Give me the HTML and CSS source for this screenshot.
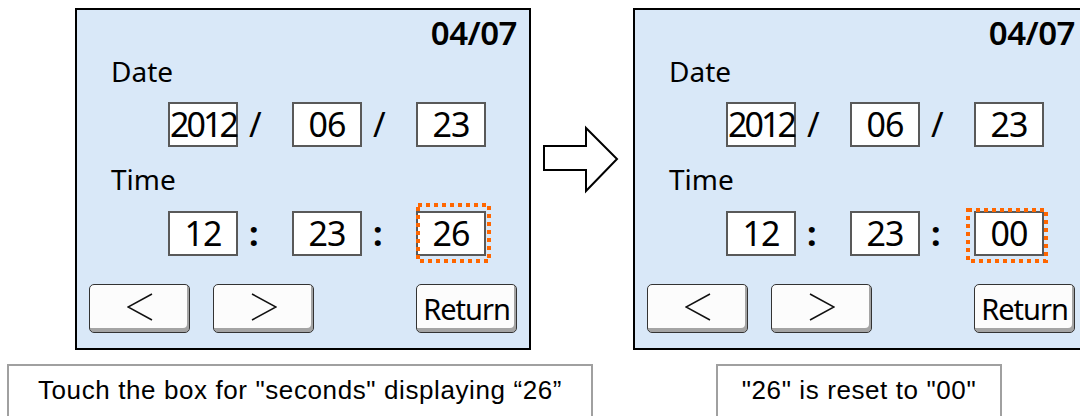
FILE: index.html
```html
<!DOCTYPE html>
<html lang="en">
<head>
    <meta charset="UTF-8">
    <meta name="viewport" content="width=device-width, initial-scale=1.0">
    <title>Date / Time setting</title>
    <link rel="stylesheet" href="styles.css">
</head>
<body>
    <div class="screens">
        <!-- before -->
        <div class="panel">
            <div class="page">04/07</div>
            <div class="label date">Date</div>
            <div class="row">
                <div class="box year">2012</div><div class="sep">/</div>
                <div class="box">06</div><div class="sep">/</div>
                <div class="box">23</div>
            </div>
            <div class="label time">Time</div>
            <div class="row">
                <div class="box">12</div><div class="sep colon">:</div>
                <div class="box">23</div><div class="sep colon">:</div>
                <div class="box">26
                    <svg class="focus focusA" width="75" height="60"><rect x="2" y="2" width="71" height="56"/></svg>
                </div>
            </div>
            <div class="buttons">
                <div class="btn"><svg width="26" height="28"><polyline points="25,1 1,14 25,27"/></svg></div>
                <div class="btn"><svg width="26" height="28"><polyline points="1,1 25,14 1,27"/></svg></div>
                <div class="btn return">Return</div>
            </div>
        </div>

        <div class="arrow">
            <svg width="102" height="342"><polygon points="13,138 55,138 55,120 86,151 55,183 55,162 13,162"/></svg>
        </div>

        <!-- after -->
        <div class="panel">
            <div class="page">04/07</div>
            <div class="label date">Date</div>
            <div class="row">
                <div class="box year">2012</div><div class="sep">/</div>
                <div class="box">06</div><div class="sep">/</div>
                <div class="box">23</div>
            </div>
            <div class="label time">Time</div>
            <div class="row">
                <div class="box">12</div><div class="sep colon">:</div>
                <div class="box">23</div><div class="sep colon">:</div>
                <div class="box">00
                    <svg class="focus focusB" width="82" height="55"><rect x="2" y="2" width="78" height="51"/></svg>
                </div>
            </div>
            <div class="buttons">
                <div class="btn"><svg width="26" height="28"><polyline points="25,1 1,14 25,27"/></svg></div>
                <div class="btn"><svg width="26" height="28"><polyline points="1,1 25,14 1,27"/></svg></div>
                <div class="btn return">Return</div>
            </div>
        </div>
    </div>

    <div class="notes">
        <div class="note first">Touch the box for "seconds" displaying “26”</div>
        <div class="note second">"26" is reset to "00"</div>
    </div>
</body>
</html>
```

FILE: styles.css
```css
* {
    box-sizing: border-box;
}
body {
    margin: 0;
    overflow: hidden;
    background: #fff;
    color: #000;
    font-family: "Noto Sans", sans-serif;
}
.screens {
    display: flex;
    padding: 8px 0 0 75px;
}
.panel {
    flex-shrink: 0;
    width: 456px;
    height: 342px;
    border: 2px solid #000;
    background: #d9e8f8;
    display: flex;
    flex-direction: column;
    padding: 0 12px;
}
.page {
    height: 33px;
    margin-top: 6px;
    text-align: right;
    font-size: 33px;
    font-weight: 600;
    letter-spacing: -0.5px;
    line-height: 33px;
}
.label {
    height: 28px;
    padding-left: 22px;
    font-size: 28px;
    line-height: 28px;
}
.label.date {
    margin-top: 8px;
}
.label.time {
    margin-top: 18px;
}
.row {
    display: flex;
    margin-top: 17px;
    padding-left: 79px;
}
.label.time + .row {
    margin-top: 18px;
}
.box {
    position: relative;
    width: 70px;
    height: 45px;
    border: 2px solid #595959;
    background: #fff;
    text-align: center;
    font-size: 34px;
    letter-spacing: -1px;
    line-height: 41px;
}
.box.year {
    letter-spacing: -3px;
}
.sep {
    width: 54px;
    padding-left: 11px;
    font-size: 34px;
    line-height: 45px;
}
.sep.colon {
    font-weight: 700;
}
.focus {
    position: absolute;
}
.focus rect {
    fill: none;
    stroke: #ff6600;
    stroke-width: 4;
    stroke-dasharray: 4 4;
}
.focusA {
    left: -2px;
    top: -10px;
}
.focusB {
    left: -10px;
    top: -5px;
}
.buttons {
    display: flex;
    gap: 23px;
    margin-top: 28px;
}
.btn {
    width: 101px;
    height: 49px;
    border: 1px solid #333;
    border-radius: 5px;
    background: #fcfcfc;
    box-shadow: inset -2px -4px 0 #a4a4a4;
    display: flex;
    align-items: center;
    justify-content: center;
    padding-bottom: 3px;
}
.btn polyline {
    fill: none;
    stroke: #111;
    stroke-width: 1.5;
}
.btn.return {
    margin-left: auto;
    padding-bottom: 0;
    font-size: 29px;
    letter-spacing: -1px;
}
.arrow {
    flex-shrink: 0;
    width: 102px;
}
.arrow polygon {
    fill: #fff;
    stroke: #000;
    stroke-width: 2;
}
.notes {
    display: flex;
    gap: 123px;
    margin-top: 9px;
    padding-left: 7px;
}
.note {
    height: 64px;
    border: 2px solid #a0a0a0;
    padding-top: 9px;
    text-align: center;
    font-family: "Liberation Sans", Arial, sans-serif;
    font-size: 26px;
    letter-spacing: 0.6px;
    line-height: 30px;
}
.note.first {
    width: 586px;
}
.note.second {
    width: 286px;
}
```
